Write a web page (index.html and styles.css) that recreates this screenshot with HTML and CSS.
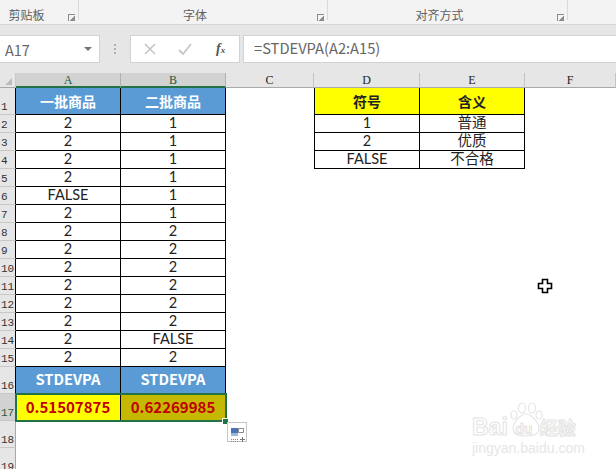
FILE: index.html
```html
<!DOCTYPE html>
<html>
<head>
<title>STDEVPA</title>
<link rel="stylesheet" href="styles.css">
</head>
<body>
<div class="ribbon">
  <div class="group group_clip"><span>剪贴板</span><i class="launcher"></i></div>
  <div class="group group_font"><span>字体</span><i class="launcher"></i></div>
  <div class="group group_align"><span>对齐方式</span><i class="launcher"></i></div>
  <div class="group group_rest"></div>
</div>
<div class="formula_bar">
  <div class="name_box"><span>A17</span><i class="caret"></i></div>
  <div class="dots"><b></b><b></b><b></b></div>
  <div class="fx_buttons">
    <svg width="12" height="12" viewBox="0 0 12 12"><path d="M1 1l10 10M11 1L1 11" stroke="#c6c6c6" stroke-width="1.6" fill="none"/></svg>
    <svg width="14" height="12" viewBox="0 0 14 12"><path d="M1 7l4 4 8-10" stroke="#c6c6c6" stroke-width="1.8" fill="none"/></svg>
    <span class="fx">f<small>x</small></span>
  </div>
  <div class="formula_input">=STDEVPA(A2:A15)</div>
</div>
<div class="sheet">
  <div class="corner"><i></i></div>
  <div class="col sel">A</div><div class="col sel">B</div><div class="col">C</div><div class="col">D</div><div class="col">E</div><div class="col">F</div>

  <div class="row">1</div><div class="cell head">一批商品</div><div class="cell head">二批商品</div><div></div><div class="cell key first">符号</div><div class="cell key">含义</div><div></div>
  <div class="row">2</div><div class="cell">2</div><div class="cell">1</div><div></div><div class="cell first">1</div><div class="cell">普通</div><div></div>
  <div class="row">3</div><div class="cell">2</div><div class="cell">1</div><div></div><div class="cell first">2</div><div class="cell">优质</div><div></div>
  <div class="row">4</div><div class="cell">2</div><div class="cell">1</div><div></div><div class="cell first">FALSE</div><div class="cell">不合格</div><div></div>
  <div class="row">5</div><div class="cell">2</div><div class="cell">1</div><div class="blank"></div>
  <div class="row">6</div><div class="cell">FALSE</div><div class="cell">1</div><div class="blank"></div>
  <div class="row">7</div><div class="cell">2</div><div class="cell">1</div><div class="blank"></div>
  <div class="row">8</div><div class="cell">2</div><div class="cell">2</div><div class="blank"></div>
  <div class="row">9</div><div class="cell">2</div><div class="cell">2</div><div class="blank"></div>
  <div class="row">10</div><div class="cell">2</div><div class="cell">2</div><div class="blank"></div>
  <div class="row">11</div><div class="cell">2</div><div class="cell">2</div><div class="blank"></div>
  <div class="row">12</div><div class="cell">2</div><div class="cell">2</div><div class="blank"></div>
  <div class="row">13</div><div class="cell">2</div><div class="cell">2</div><div class="blank"></div>
  <div class="row">14</div><div class="cell">2</div><div class="cell">FALSE</div><div class="blank"></div>
  <div class="row">15</div><div class="cell">2</div><div class="cell">2</div><div class="blank"></div>
  <div class="row">16</div><div class="cell head latin">STDEVPA</div><div class="cell head latin">STDEVPA</div><div class="blank"></div>
  <div class="row sel">17</div><div class="cell result yellow">0.51507875</div><div class="cell result olive">0.62269985</div><div class="blank"></div>
  <div class="row plain">18</div><div class="blank wide"></div>
  <div class="row plain">19</div><div class="blank wide"></div>

  <div class="selection"><i class="handle"></i></div>
</div>

<div class="paste_options">
  <svg width="17" height="16" viewBox="0 0 17 16">
    <rect x="2" y="1" width="7" height="5" fill="#4a74b8"/>
    <rect x="2" y="6" width="7" height="3" fill="#9db6dc"/>
    <path d="M9.5 1.5h5v4h-5z" stroke="#8a8a8a" fill="none"/>
    <path d="M2 12.5h8M2 14.5h8" stroke="#8a8a8a" stroke-dasharray="1 1" fill="none"/>
    <path d="M13.5 10v5M11 12.5h5" stroke="#777" fill="none"/>
  </svg>
</div>

<svg class="cursor" width="16" height="16" viewBox="0 0 16 16">
  <path d="M5.5 1.5h5v4h4v5h-4v4h-5v-4h-4v-5h4z" fill="#fff" stroke="#000" stroke-width="1.6"/>
</svg>

<div class="watermark">
  <svg class="paw" width="36" height="36" viewBox="0 0 36 36">
    <g fill="#fff" stroke="#e6e6e6" stroke-width="1.2">
      <ellipse cx="14" cy="6" rx="3.5" ry="5"/>
      <ellipse cx="24" cy="6" rx="3.5" ry="5"/>
      <ellipse cx="6" cy="13" rx="3" ry="4"/>
      <ellipse cx="31" cy="13" rx="3" ry="4"/>
      <path d="M18 12c-5 0-13 8-13 15 0 5 6 7 13 7s13-2 13-7c0-7-8-15-13-15z"/>
    </g>
  </svg>
  <div class="wm_name"><span>Bai</span><span class="wm_du">du</span><span>经验</span></div>
  <div class="wm_url">jingyan.baidu.com</div>
</div>
</body>
</html>
```
FILE: styles.css
```css
* {
  box-sizing: border-box;
}
html, body {
  margin: 0;
  height: 469px;
  overflow: hidden;
  background-color: #fff;
}
body {
  position: relative;
  font-family: "Noto Sans CJK SC", sans-serif;
}

/* ribbon */
.ribbon {
  display: flex;
  height: 25px;
  background-color: #f3f3f3;
  border-bottom: 1px solid #d6d6d6;
}
.group {
  position: relative;
  height: 20px;
  border-right: 1px solid #d9d9d9;
  padding-top: 5px;
  text-align: center;
  font-size: 12px;
  line-height: 20px;
  color: #606060;
}
.group_clip { width: 79px; padding-right: 25px; }
.group_font { width: 249px; padding-right: 16px; }
.group_align { width: 240px; padding-right: 16px; }
.group_rest { flex: 1; border-right: none; }
.launcher {
  position: absolute;
  right: 3px;
  top: 14px;
  width: 7px;
  height: 7px;
  border-left: 1px solid #8c8c8c;
  border-top: 1px solid #8c8c8c;
  background: linear-gradient(135deg, transparent 55%, #8c8c8c 55%);
}

/* formula bar */
.formula_bar {
  display: flex;
  align-items: center;
  height: 48px;
  background-color: #e6e6e6;
}
.name_box {
  display: flex;
  align-items: center;
  justify-content: space-between;
  width: 100px;
  height: 28px;
  padding: 0 7px 0 5px;
  background-color: #fff;
  border: 1px solid #d2d2d2;
  border-left: none;
  font-size: 14.5px;
  color: #666;
}
.caret {
  border-left: 4px solid transparent;
  border-right: 4px solid transparent;
  border-top: 4px solid #777;
}
.dots {
  display: flex;
  flex-direction: column;
  gap: 2px;
  width: 30px;
  align-items: center;
}
.dots b {
  width: 2px;
  height: 2px;
  background-color: #b0b0b0;
}
.fx_buttons {
  display: flex;
  align-items: center;
  width: 110px;
  height: 28px;
  gap: 22px;
  padding-left: 13px;
  background-color: #fff;
  border: 1px solid #d2d2d2;
}
.fx {
  margin-left: 2px;
  font-family: "Liberation Serif", serif;
  font-style: italic;
  font-weight: bold;
  font-size: 14px;
  color: #555;
}
.fx small {
  font-size: 9px;
}
.formula_input {
  flex: 1;
  height: 28px;
  margin-left: 3px;
  padding-left: 10px;
  background-color: #fff;
  border: 1px solid #d2d2d2;
  border-right: none;
  font-size: 14.7px;
  line-height: 24px;
  color: #666;
}

/* sheet */
.sheet {
  position: relative;
  display: grid;
  grid-template-columns: 16px 105px 105px 88px 106px 105px 1fr;
  grid-template-rows: 15px 27px repeat(14, 18px) 27px 27px 27px 27px;
  font-family: "Lato", "Noto Sans CJK SC", sans-serif;
  font-size: 14.5px;
  line-height: 15px;
  color: #222;
  background-color: #fff;
}
.corner {
  position: relative;
  background-color: #e6e6e6;
  border-bottom: 1px solid #a8a8a8;
  border-right: 1px solid #c8c8c8;
}
.corner i {
  position: absolute;
  right: 3px;
  bottom: 2px;
  border-left: 7px solid transparent;
  border-bottom: 7px solid #bcbcbc;
}
.col {
  background-color: #e6e6e6;
  border-bottom: 1px solid #a8a8a8;
  border-right: 1px solid #c4c4c4;
  text-align: center;
  font-family: "Liberation Serif", serif;
  font-size: 12px;
  line-height: 15px;
  color: #222;
}
.col.sel {
  background-color: #d2d2d2;
  border-bottom: 2px solid #217346;
  border-right-color: #b0b0b0;
  color: #1d5c3a;
}
.row {
  display: flex;
  align-items: flex-end;
  padding-left: 1px;
  background-color: #e6e6e6;
  border-bottom: 1px solid #c8c8c8;
  border-right: 1px solid #000;
  font-family: "Liberation Mono", monospace;
  font-size: 11px;
  line-height: 13px;
  color: #333;
}
.row.plain {
  border-right-color: #a8a8a8;
}
.row.sel {
  background-color: #d2d2d2;
  color: #1d5c3a;
}
.cell {
  text-align: center;
  border-right: 1px solid #000;
  border-bottom: 1px solid #000;
  white-space: nowrap;
}
.first {
  border-left: 1px solid #000;
}
.blank {
  grid-column: 4 / 8;
}
.blank.wide {
  grid-column: 2 / 8;
}
.head {
  background-color: #5b9bd5;
  color: #fff;
  font-family: "Noto Sans CJK SC", sans-serif;
  font-size: 14px;
  font-weight: bold;
  line-height: 26px;
}
.head.latin {
  font-size: 14.7px;
  line-height: 24px;
}
.key {
  background-color: #ff0;
  color: #222;
  font-family: "Noto Sans CJK SC", sans-serif;
  font-size: 14px;
  font-weight: bold;
  line-height: 26px;
}
.result {
  font-family: "Noto Sans CJK SC", sans-serif;
  font-size: 15px;
  font-weight: bold;
  color: #c00000;
  line-height: 26px;
}
.yellow {
  grid-column: 2;
  grid-row: 18;
  background-color: #ff0;
}
.olive {
  grid-column: 3;
  grid-row: 18;
  background-color: #c4b800;
}

.selection {
  grid-column: 2 / 4;
  grid-row: 18;
  margin: -1px -1px -1px -1px;
  border: 2px solid #217346;
  position: relative;
  pointer-events: none;
}
.handle {
  position: absolute;
  right: -4px;
  bottom: -5px;
  width: 5px;
  height: 5px;
  background-color: #217346;
  border: 1px solid #fff;
  box-sizing: content-box;
}

/* things lying on top of the sheet */
.paste_options {
  position: absolute;
  left: 227px;
  top: 422px;
  width: 20px;
  height: 20px;
  padding: 1px;
  background-color: #fff;
  border: 1px solid #c6c6c6;
}
.cursor {
  position: absolute;
  left: 537px;
  top: 278px;
}
.watermark {
  position: absolute;
  left: 472px;
  top: 402px;
  width: 112px;
  height: 56px;
}
.paw {
  position: absolute;
  left: 36px;
  top: 0;
}
.wm_name {
  position: absolute;
  left: 0;
  top: 12px;
  display: flex;
  font-family: "Liberation Sans", sans-serif;
  font-weight: bold;
  font-size: 23px;
  line-height: 26px;
  white-space: nowrap;
  color: #fff;
  -webkit-text-stroke: 1px #e4e4e4;
}
.wm_du {
  width: 30px;
  margin: 0 1px;
  text-align: center;
  font-size: 14px;
  line-height: 30px;
}
.wm_name span:last-child {
  font-family: "Noto Sans CJK SC", sans-serif;
  font-size: 18px;
}
.wm_url {
  position: absolute;
  left: 0;
  top: 38px;
  font-family: "Liberation Sans", sans-serif;
  font-size: 14px;
  line-height: 16px;
  white-space: nowrap;
  color: #e6e6e6;
}
```
